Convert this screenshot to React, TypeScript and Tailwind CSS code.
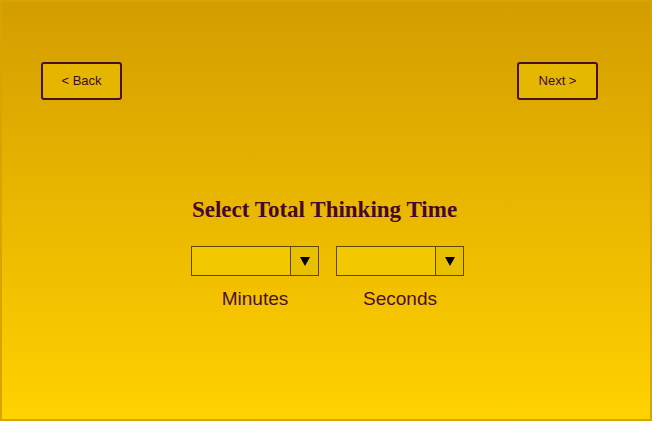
import React from 'react';

const Select: React.FC<{ label: string }> = ({ label }) => (
  <div className="flex flex-col items-center">
    <div className="flex h-[30px] w-[128px] border border-[#5c4800] bg-[#f2c900]">
      <div className="flex-1" />
      <div className="flex w-[28px] items-center justify-center border-l border-[#5c4800] bg-[#e8c000]">
        <svg width="10" height="9" viewBox="0 0 10 9">
          <path d="M0 0 L10 0 L5 9 Z" fill="#000" />
        </svg>
      </div>
    </div>
    <span className="mt-[12px] text-[19px] leading-[22px] text-[#4a0f2e] font-['Liberation_Sans',Arial,sans-serif]">
      {label}
    </span>
  </div>
);

const App: React.FC = () => {
  return (
    <div className="h-[421px] w-[652px] border-2 border-[#d6a600] bg-gradient-to-b from-[#d49d00] to-[#ffd200] font-['Liberation_Sans',Arial,sans-serif]">
      <nav className="flex justify-between pl-[39px] pr-[52px] pt-[60px]">
        <button className="h-[38px] w-[81px] rounded-[3px] border-2 border-[#4a0f2e] bg-[#e4b600] text-[13px] text-[#3d0a2a]">
          &lt; Back
        </button>
        <button className="h-[38px] w-[81px] rounded-[3px] border-2 border-[#4a0f2e] bg-[#e4b800] text-[13px] text-[#3d0a2a]">
          Next &gt;
        </button>
      </nav>

      <main className="mt-[96px] flex flex-col items-center pl-[3px]">
        <h1 className="pr-[6px] text-[23px] font-bold leading-[28px] text-[#45082f] font-['Liberation_Serif','Times_New_Roman',serif]">
          Select Total Thinking Time
        </h1>
        <div className="mt-[22px] flex gap-[17px]">
          <Select label="Minutes" />
          <Select label="Seconds" />
        </div>
      </main>
    </div>
  );
};

export default App;
